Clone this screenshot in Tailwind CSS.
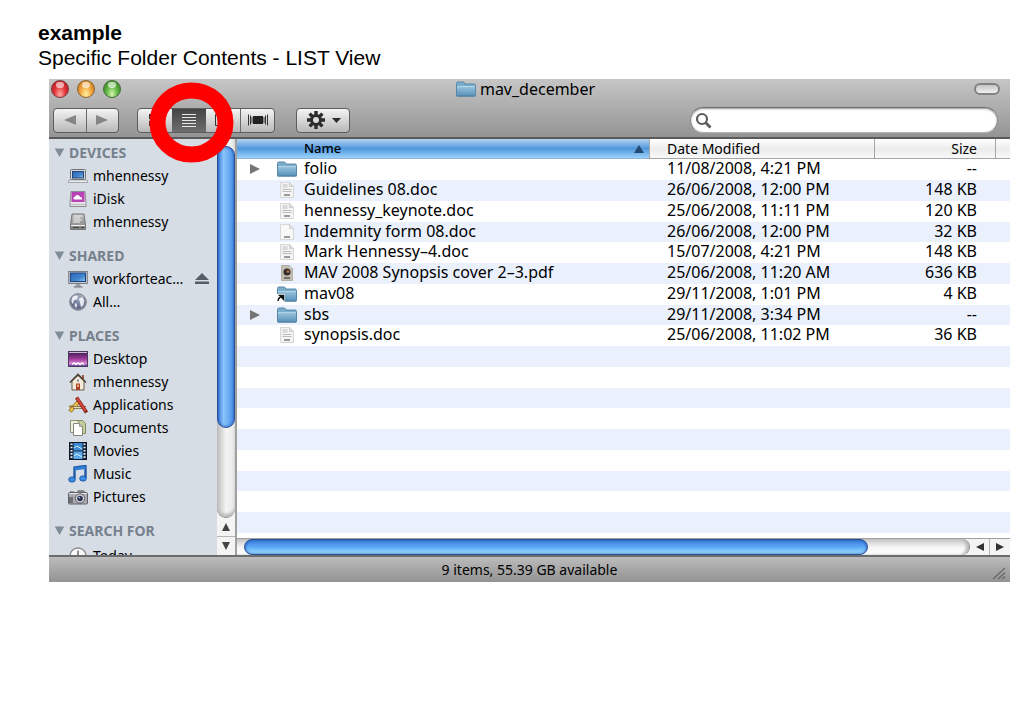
<!DOCTYPE html>
<html lang="en">
<head>
<meta charset="utf-8">
<title>Specific Folder Contents - LIST View</title>
<script src="https://cdn.jsdelivr.net/npm/@tailwindcss/browser@4"></script>
</head>
<body class="bg-white text-black">
<svg width="0" height="0" class="absolute" aria-hidden="true">
  <defs>
    <linearGradient id="gFolder" x1="0" y1="0" x2="0" y2="1"><stop offset="0" stop-color="#98c3dc"/><stop offset="1" stop-color="#5c94bb"/></linearGradient>
    <linearGradient id="gScreen" x1="0" y1="0" x2="1" y2="1"><stop offset="0" stop-color="#2c66b8"/><stop offset=".6" stop-color="#3f86cf"/><stop offset="1" stop-color="#8cc4ee"/></linearGradient>
    <linearGradient id="gDesk" x1="0" y1="0" x2="0" y2="1"><stop offset="0" stop-color="#3a1a50"/><stop offset=".5" stop-color="#a03a9c"/><stop offset=".8" stop-color="#d98ad6"/><stop offset="1" stop-color="#3c2f8a"/></linearGradient>
    <linearGradient id="gMetal" x1="0" y1="0" x2="0" y2="1"><stop offset="0" stop-color="#c2c2c2"/><stop offset="1" stop-color="#7e7e7e"/></linearGradient>
    <radialGradient id="gGlobe"><stop offset="0" stop-color="#8790b0"/><stop offset=".7" stop-color="#5f6987"/><stop offset="1" stop-color="#8a8f9c"/></radialGradient>
    <symbol id="folder" viewBox="0 0 20 16">
      <path d="M.5 2.500q0-1.500 1.500-1.500h5q1 0 1.400 1l.4 1H18q1.500 0 1.500 1.500V14q0 1-1 1h-17q-1 0-1-1z" fill="#7aaccb" stroke="#5687a8"/>
      <path d="M1 5.500h18V14.500H1z" fill="url(#gFolder)"/>
      <path d="M1 5.500h18" stroke="#b3d4e6"/>
      <path d="M.5 15h19" stroke="#477899"/>
    </symbol>
    <symbol id="doc" viewBox="0 0 18 18">
      <path d="M2.500 1.500h9l4 4v11h-13z" fill="#f4f4f4" stroke="#d6d6d6"/>
      <path d="M11.500 1.500v4h4z" fill="#dedede" stroke="#cecece"/>
      <path d="M4.500 4h5M4.500 6h5M4.500 8.500h9M4.500 10.500h9" stroke="#bcbcbc"/>
      <path d="M6 14h6" stroke="#999" stroke-width="2"/>
    </symbol>
    <symbol id="docblank" viewBox="0 0 18 18">
      <path d="M2.500 1.500h9l4 4v11h-13z" fill="#f8f8f8" stroke="#d8d8d8"/>
      <path d="M11.500 1.500v4h4z" fill="#e6e6e6" stroke="#d2d2d2"/>
      <path d="M6 14h6" stroke="#999" stroke-width="2"/>
    </symbol>
    <symbol id="pdf" viewBox="0 0 18 18">
      <path d="M3.500 1.500h8l3 3v12h-11z" fill="#c4beb2" stroke="#b3afa6"/>
      <path d="M11.500 1.500v3h3z" fill="#eee" stroke="#bbb"/>
      <circle cx="9" cy="8" r="3.600" fill="#35302d"/><circle cx="10" cy="7.500" r="1.500" fill="#a8683b"/>
      <path d="M6 14h6" stroke="#73706b" stroke-width="2"/>
    </symbol>
    <symbol id="laptop" viewBox="0 0 20 18">
      <rect x="2.500" y="2.500" width="15" height="10" rx="1" fill="#d9dde3" stroke="#6c727b"/>
      <rect x="4.500" y="4.500" width="11" height="6.500" fill="url(#gScreen)" stroke="#27426b"/>
      <path d="M1 13h18l1 2.500H0z" fill="#eceef0" stroke="#858a91" stroke-width=".7"/>
    </symbol>
    <symbol id="idisk" viewBox="0 0 20 18">
      <path d="M3 1.500h14l1 12v3H2v-3z" fill="#e6e6ea" stroke="#8b8b92"/>
      <rect x="3.500" y="2" width="13" height="10" fill="#b843b4"/>
      <path d="M6 9.500q-1.500-2 .7-2.500.6-2.300 3-2 2 .3 2.400 2 2.400-.2 2.200 2.500z" fill="#fff"/>
      <path d="M3 14.500h14" stroke="#bbb"/>
    </symbol>
    <symbol id="disk" viewBox="0 0 20 18">
      <path d="M4 1h12l1.500 11v4.500h-15V12z" fill="url(#gMetal)" stroke="#777"/>
      <path d="M6 3h8M6 5h6M5.500 7h8M5 9h7" stroke="#f0f0f0"/>
      <path d="M3 12.500h14" stroke="#eee"/><path d="M5 14.500h6M13 14.500h3" stroke="#444"/>
    </symbol>
    <symbol id="monitor" viewBox="0 0 20 18">
      <rect x=".7" y="1.500" width="18.600" height="12" fill="#c5c9ce" stroke="#777d86"/>
      <rect x="2.500" y="3" width="15" height="8.500" fill="url(#gScreen)" stroke="#1f437f"/>
      <path d="M8 14h4l1 3H7z" fill="#9ba0a7"/><path d="M5.500 17h9" stroke="#6f7379"/>
    </symbol>
    <symbol id="globe" viewBox="0 0 20 18">
      <circle cx="10" cy="9" r="8.300" fill="url(#gGlobe)" stroke="#7d8290"/>
      <path d="M4 5q3-3.500 6-2l-1 3-3 1.500-1 3.500q-2.500-2-1-6zM11 6l3-2 2.500 3-1 5-2.500 2.500-1-4.500zM7 10l2 1-.5 4-2-2z" fill="#e3e6ee"/>
      <ellipse cx="10" cy="4.500" rx="6" ry="3" fill="#fff" opacity=".35"/>
    </symbol>
    <symbol id="desktop" viewBox="0 0 20 18">
      <rect x=".5" y="1.500" width="19" height="15" fill="url(#gDesk)" stroke="#4b3a5e"/>
      <path d="M1 2.500h18" stroke="#c9bdd2"/>
      <path d="M4 14.500l2-1.500 2 1.500 2-1.500 2 1.500 2-1.500 2 1.500" stroke="#fff" stroke-width="1.500" fill="none"/>
    </symbol>
    <symbol id="home" viewBox="0 0 20 18">
      <path d="M14 2h2v4h-2z" fill="#9b5b3a"/>
      <path d="M4 8l6-5.500L16 8v9H4z" fill="#f3ead7" stroke="#6b5c4a"/>
      <path d="M2 9.500l8-8 8 8" fill="none" stroke="#4d423a" stroke-width="1.700"/>
      <path d="M8 10.500h4V17H8z" fill="#a8412a"/><path d="M9.200 11.500h1.600v2.500H9.200z" fill="#f4c48c"/>
      <path d="M9 6.500h2v2H9z" fill="#6f88a8"/>
    </symbol>
    <symbol id="apps" viewBox="0 0 20 18">
      <path d="M11 5L2 15.500" stroke="#8b6a20" stroke-width="4"/><path d="M11 5L2.500 15" stroke="#f1c84a" stroke-width="2.600"/>
      <path d="M1 10.500h4" stroke="#9a7b2c" stroke-width="2"/>
      <path d="M5 11.500h13" stroke="#6d5233" stroke-width="3"/><path d="M5.500 11.500h12.500" stroke="#ecdcae" stroke-width="1.600"/>
      <path d="M8.500 1.500l10 15" stroke="#7e1f18" stroke-width="3.600"/><path d="M9 2l8.500 13" stroke="#d9483a" stroke-width="2.200"/>
    </symbol>
    <symbol id="docs" viewBox="0 0 20 18">
      <path d="M7.500 1.500h7l3 3v10h-10z" fill="#c6cf9c" stroke="#828a62"/>
      <path d="M2.500 1.500h6l3 2v10h-9z" fill="#eef0e2" stroke="#8c9175"/>
      <path d="M5.500 4.500h6l3 3v9h-9z" fill="#fff" stroke="#858779"/>
      <path d="M11.500 4.500v3h3z" fill="#ddd" stroke="#999"/>
    </symbol>
    <symbol id="movies" viewBox="0 0 20 18">
      <rect x="1.500" y=".5" width="17" height="17" fill="#16253b" stroke="#0d1726"/>
      <rect x="5.500" y="1" width="9" height="7.500" fill="#3b8bd6"/><rect x="5.500" y="9.500" width="9" height="7.500" fill="#5aa9e8"/>
      <path d="M6 6l3-2 5 3M6 14l3-2 5 3" stroke="#d6efff" fill="none"/>
      <path d="M3.500 1.500v15M16.500 1.500v15" stroke="#e6eef7" stroke-width="2" stroke-dasharray="1.600 1.600"/>
    </symbol>
    <symbol id="music" viewBox="0 0 20 18">
      <path d="M6.500 14V2.500l11-1.500v12" fill="none" stroke="#1d5ba8" stroke-width="2.400"/>
      <path d="M6.500 4l11-1.500" stroke="#2f7fd6" stroke-width="3"/>
      <ellipse cx="4" cy="14.500" rx="3.300" ry="2.600" fill="#3c8fe4" stroke="#1d5ba8"/>
      <ellipse cx="15" cy="13.500" rx="3.300" ry="2.600" fill="#3c8fe4" stroke="#1d5ba8"/>
    </symbol>
    <symbol id="camera" viewBox="0 0 20 18">
      <path d="M2 3.500h4v2H2z" fill="#4a4a4a"/><path d="M9 4l1-2h6l1 2" fill="#888"/>
      <rect x=".5" y="4.500" width="19" height="11.500" rx="1" fill="#a9abb0" stroke="#5f6166"/>
      <path d="M1 5.500h18" stroke="#e4e5e8"/><path d="M1 9v6h4V9z" fill="#6d6f75"/>
      <circle cx="12" cy="10.500" r="4.600" fill="#d5d7db" stroke="#5d5f66"/><circle cx="12" cy="10.500" r="2.800" fill="#2c3350"/><circle cx="11.300" cy="9.600" r=".9" fill="#aab8e0"/>
    </symbol>
    <symbol id="clock" viewBox="0 0 20 18">
      <circle cx="10" cy="9" r="8" fill="#fafafa" stroke="#8d8d8d" stroke-width="1.400"/>
      <path d="M10 3.500V9h4" fill="none" stroke="#555" stroke-width="1.300"/>
    </symbol>
    <symbol id="right" viewBox="0 0 12 12"><path d="M1 1l10 5-10 5z" fill="#757575"/></symbol>
    <symbol id="down" viewBox="0 0 12 12"><path d="M.8 1.500h10.400L6 11z" fill="#818c99"/></symbol>
  </defs>
</svg>

<main class="relative flex h-screen flex-col overflow-hidden pt-5 pr-[13px] pb-[126px] pl-[49px]">
  <header class="-ml-[11px] mb-[9px] font-['Liberation_Sans',sans-serif] text-[21px] leading-[25px]">
    <h1 class="font-bold">example</h1>
    <p>Specific Folder Contents - LIST View</p>
  </header>

  <section aria-label="mav_december" class="flex min-h-0 flex-1 flex-col font-['Noto_Sans',sans-serif]">
    <!-- title bar and toolbar -->
    <div class="border-b-2 border-[#5a5a5a] bg-linear-to-b from-[#c6c6c6] to-[#949494]">
      <div class="flex h-5 items-center px-[2px]">
        <div class="flex flex-1 gap-2">
          <button aria-label="Close" class="size-[18px] rounded-full border border-[#7d3a3a] bg-radial-[at_50%_85%] from-[#ffa9a0] via-[#e0333a] to-[#a8141c] p-[2px]"><span class="mx-auto block h-1.5 w-2 -translate-y-1 rounded-full bg-white/60"></span></button>
          <button aria-label="Minimise" class="size-[18px] rounded-full border border-[#8a6331] bg-radial-[at_50%_85%] from-[#fff0a0] via-[#f2a640] to-[#c06a17] p-[2px]"><span class="mx-auto block h-1.5 w-2 -translate-y-1 rounded-full bg-white/60"></span></button>
          <button aria-label="Zoom" class="size-[18px] rounded-full border border-[#3f6a34] bg-radial-[at_50%_85%] from-[#d2f7a8] via-[#62b445] to-[#2f7a24] p-[2px]"><span class="mx-auto block h-1.5 w-2 -translate-y-1 rounded-full bg-white/60"></span></button>
        </div>
        <div class="flex items-center gap-1 text-[16px] leading-5">
          <svg class="h-4 w-5"><use href="#folder"/></svg><h2>mav_december</h2>
        </div>
        <div class="flex flex-1 justify-end pr-2">
          <button aria-label="Toggle toolbar" class="h-3 w-[26px] rounded-full border-2 border-[#828282] bg-linear-to-b from-[#c4c4c4] to-[#f2f2f2]"></button>
        </div>
      </div>
      <div class="flex h-[38px] items-center pt-1 pr-3 pl-1">
        <div class="flex h-[25px] w-[66px] rounded-[4px] border border-[#5d5d5d] bg-linear-to-b from-[#f4f4f4] to-[#b9b9b9]">
          <button aria-label="Back" class="flex flex-1 items-center justify-center border-r border-[#6a6a6a]"><svg class="h-[10px] w-3" viewBox="0 0 12 10"><path d="M12 0v10L0 5z" fill="#868686"/></svg></button>
          <button aria-label="Forward" class="flex flex-1 items-center justify-center"><svg class="h-[10px] w-3" viewBox="0 0 12 10"><path d="M0 0v10l12-5z" fill="#868686"/></svg></button>
        </div>
        <div class="ml-[18px] grid h-[25px] w-[138px] grid-cols-4 rounded-[4px] border border-[#5d5d5d] bg-linear-to-b from-[#f4f4f4] to-[#b9b9b9]">
          <button aria-label="Icon view" class="flex items-center justify-center"><svg class="h-3 w-4" viewBox="0 0 16 12"><path d="M2 0h5v5H2zM9 0h5v5H9zM2 7h5v5H2zM9 7h5v5H9z" fill="#333"/></svg></button>
          <button aria-label="List view" aria-pressed="true" class="flex items-center justify-center bg-linear-to-b from-[#444] to-[#6e6e6e]"><svg class="h-[13px] w-4" viewBox="0 0 16 13"><path d="M1 .5h14M1 3.500h14M1 6.500h14M1 9.500h14M1 12.500h14" stroke="#e6e6e6"/></svg></button>
          <button aria-label="Column view" class="flex items-center justify-center"><svg class="h-3 w-4" viewBox="0 0 16 12"><path d="M.5 .5h15v11H.5zM5.500 0v12M10.500 0v12" fill="none" stroke="#333"/></svg></button>
          <button aria-label="Cover Flow" class="flex items-center justify-center border-l border-[#6a6a6a]"><svg class="h-3 w-5" viewBox="0 0 20 12"><path d="M5 2h10v8H5z" fill="#222"/><path d="M.5 .5v11M2.500 1.500v9M17.500 1.500v9M19.500 .5v11M4 3v6M16 3v6" stroke="#333"/></svg></button>
        </div>
        <button aria-label="Action" class="ml-[21px] flex h-[25px] w-[54px] items-center justify-center gap-1.5 rounded-[4px] border border-[#5d5d5d] bg-linear-to-b from-[#f4f4f4] to-[#b9b9b9]">
          <svg class="h-[18px] w-5" viewBox="0 0 20 18"><path d="M10 0v18M1 9h18M3.600 2.600l12.800 12.800M16.400 2.600L3.600 15.400" stroke="#2b2b2b" stroke-width="3.400"/><circle cx="10" cy="9" r="6" fill="#2b2b2b"/><circle cx="10" cy="9" r="3" fill="#dcdcdc"/></svg>
          <svg class="h-[5px] w-[9px]" viewBox="0 0 9 5"><path d="M0 0h9L4.500 5z" fill="#2b2b2b"/></svg>
        </button>
        <label class="ml-auto flex h-[26px] w-[308px] items-center rounded-full border border-t-[#6d6d6d] border-r-[#8c8c8c] border-b-[#b5b5b5] border-l-[#8c8c8c] bg-white pl-1 shadow-[inset_0_1px_2px_#999]">
          <svg class="size-[17px]" viewBox="0 0 17 17"><circle cx="7" cy="7" r="5" fill="none" stroke="#5c5c5c" stroke-width="2.200"/><path d="M10.500 10.500l5 5" stroke="#5c5c5c" stroke-width="2.800"/></svg>
          <input type="search" aria-label="Search" class="min-w-0 flex-1 bg-transparent px-2 text-[14px] outline-none">
        </label>
      </div>
    </div>

    <div class="flex min-h-0 flex-1">
      <!-- sidebar -->
      <nav aria-label="Sidebar" class="w-[168px] shrink-0 overflow-hidden bg-[#d6dde5] pt-[2px] text-[14px] leading-[23px] whitespace-nowrap">
        <h3 class="flex items-center gap-1 pl-[5px] font-bold text-[#76818e]"><svg class="size-[11px]"><use href="#down"/></svg>DEVICES</h3>
        <ul>
          <li><a href="#" class="flex items-center gap-[5px] pl-[19px]"><svg class="h-[18px] w-5"><use href="#laptop"/></svg>mhennessy</a></li>
          <li><a href="#" class="flex items-center gap-[5px] pl-[19px]"><svg class="h-[18px] w-5"><use href="#idisk"/></svg>iDisk</a></li>
          <li><a href="#" class="flex items-center gap-[5px] pl-[19px]"><svg class="h-[18px] w-5"><use href="#disk"/></svg>mhennessy</a></li>
        </ul>
        <h3 class="mt-[11px] flex items-center gap-1 pl-[5px] font-bold text-[#76818e]"><svg class="size-[11px]"><use href="#down"/></svg>SHARED</h3>
        <ul>
          <li class="flex items-center justify-between pr-2"><a href="#" class="flex items-center gap-[5px] pl-[19px]"><svg class="h-[18px] w-5"><use href="#monitor"/></svg>workforteac…</a><button aria-label="Eject"><svg class="h-[11px] w-[14px]" viewBox="0 0 14 11"><path d="M7 0l7 7H0zM0 8.500h14V11H0z" fill="#555d66"/></svg></button></li>
          <li><a href="#" class="flex items-center gap-[5px] pl-[19px]"><svg class="h-[18px] w-5"><use href="#globe"/></svg>All…</a></li>
        </ul>
        <h3 class="mt-[11px] flex items-center gap-1 pl-[5px] font-bold text-[#76818e]"><svg class="size-[11px]"><use href="#down"/></svg>PLACES</h3>
        <ul>
          <li><a href="#" class="flex items-center gap-[5px] pl-[19px]"><svg class="h-[18px] w-5"><use href="#desktop"/></svg>Desktop</a></li>
          <li><a href="#" class="flex items-center gap-[5px] pl-[19px]"><svg class="h-[18px] w-5"><use href="#home"/></svg>mhennessy</a></li>
          <li><a href="#" class="flex items-center gap-[5px] pl-[19px]"><svg class="h-[18px] w-5"><use href="#apps"/></svg>Applications</a></li>
          <li><a href="#" class="flex items-center gap-[5px] pl-[19px]"><svg class="h-[18px] w-5"><use href="#docs"/></svg>Documents</a></li>
          <li><a href="#" class="flex items-center gap-[5px] pl-[19px]"><svg class="h-[18px] w-5"><use href="#movies"/></svg>Movies</a></li>
          <li><a href="#" class="flex items-center gap-[5px] pl-[19px]"><svg class="h-[18px] w-5"><use href="#music"/></svg>Music</a></li>
          <li><a href="#" class="flex items-center gap-[5px] pl-[19px]"><svg class="h-[18px] w-5"><use href="#camera"/></svg>Pictures</a></li>
        </ul>
        <h3 class="mt-[11px] flex items-center gap-1 pl-[5px] font-bold text-[#76818e]"><svg class="size-[11px]"><use href="#down"/></svg>SEARCH FOR</h3>
        <ul>
          <li><a href="#" class="flex items-center gap-[5px] pt-[2px] pl-[19px]"><svg class="h-[18px] w-5"><use href="#clock"/></svg>Today</a></li>
        </ul>
      </nav>

      <!-- sidebar scroll bar -->
      <div class="flex w-5 shrink-0 flex-col border-r-2 border-[#a0a0a0] bg-[#f4f4f4]">
        <div class="min-h-0 flex-1 rounded-b-full border-b border-[#8b8b8b] bg-linear-to-r from-[#bdbdbd] via-[#f4f4f4] to-[#e8e8e8] pt-[7px] shadow-[inset_0_-3px_3px_#bbb]">
          <div class="h-[76%] rounded-full border border-[#2a4f95] bg-linear-to-r from-[#3f7fdc] via-[#8ac4fa] via-35% to-[#4a90e6] shadow-[inset_0_0_3px_#1b4fb0]"></div>
        </div>
        <button aria-label="Scroll up" class="flex h-[19px] shrink-0 items-center justify-center border-b border-[#b4b4b4]"><svg class="size-2" viewBox="0 0 8 8"><path d="M4 0l4 8H0z" fill="#444"/></svg></button>
        <button aria-label="Scroll down" class="flex h-[18px] shrink-0 items-center justify-center"><svg class="size-2" viewBox="0 0 8 8"><path d="M0 0h8L4 8z" fill="#444"/></svg></button>
      </div>

      <!-- file list -->
      <div class="flex min-w-0 flex-1 flex-col">
        <div class="min-h-0 flex-1 overflow-hidden">
          <table class="w-full table-fixed border-separate border-spacing-0 text-[16px] leading-[19px] whitespace-nowrap">
            <colgroup><col><col class="w-[226px]"><col class="w-[121px]"><col class="w-[14px]"></colgroup>
            <thead class="text-[14px] leading-[19px]">
              <tr class="bg-linear-to-b from-white via-[#ececec] to-[#fafafa] text-left">
                <th scope="col" class="border-b border-[#8fb4d8] bg-linear-to-b from-[#b5d3f2] via-[#4f97dc] to-[#9bd2fb] p-0 font-medium"><button class="flex w-full items-center justify-between pr-[5px] pl-[67px] text-[13px] leading-[19px]">Name<svg class="h-2 w-[10px]" viewBox="0 0 10 8"><path d="M5 0l5 8H0z" fill="#24496f"/></svg></button></th>
                <th scope="col" class="border-r border-b border-l border-[#a5a5a5] p-0 pl-[17px] font-normal">Date Modified</th>
                <th scope="col" class="border-r border-b border-[#a5a5a5] p-0 pr-[18px] text-right font-normal">Size</th>
                <td class="border-b border-[#a5a5a5] p-0"></td>
              </tr>
            </thead>
            <tbody class="[&_td]:p-0 [&_td]:align-top [&_td:nth-child(2)]:pl-[18px] [&_td:nth-child(3)]:pr-[19px] [&_td:nth-child(3)]:text-right [&>tr]:h-[21px] [&>tr:nth-child(4n)]:h-5 [&>tr:nth-child(even)]:bg-[#eaf1fd]">
              <tr><td><div class="flex items-center pl-3"><button aria-label="Expand folio" class="flex w-7 items-center"><svg class="size-3"><use href="#right"/></svg></button><svg class="mr-[7px] h-4 w-5"><use href="#folder"/></svg>folio</div></td><td>11/08/2008, 4:21 PM</td><td>--</td><td></td></tr>
              <tr><td><div class="flex items-center pl-10"><svg class="mr-[7px] h-[18px] w-5"><use href="#doc"/></svg>Guidelines 08.doc</div></td><td>26/06/2008, 12:00 PM</td><td>148 KB</td><td></td></tr>
              <tr><td><div class="flex items-center pl-10"><svg class="mr-[7px] h-[18px] w-5"><use href="#doc"/></svg>hennessy_keynote.doc</div></td><td>25/06/2008, 11:11 PM</td><td>120 KB</td><td></td></tr>
              <tr><td><div class="flex items-center pl-10"><svg class="mr-[7px] h-[18px] w-5"><use href="#docblank"/></svg>Indemnity form 08.doc</div></td><td>26/06/2008, 12:00 PM</td><td>32 KB</td><td></td></tr>
              <tr><td><div class="flex items-center pl-10"><svg class="mr-[7px] h-[18px] w-5"><use href="#doc"/></svg>Mark Hennessy–4.doc</div></td><td>15/07/2008, 4:21 PM</td><td>148 KB</td><td></td></tr>
              <tr><td><div class="flex items-center pl-10"><svg class="mr-[7px] h-[18px] w-5"><use href="#pdf"/></svg>MAV 2008 Synopsis cover 2–3.pdf</div></td><td>25/06/2008, 11:20 AM</td><td>636 KB</td><td></td></tr>
              <tr><td><div class="flex items-center pl-10"><svg class="mr-[7px] h-4 w-5" viewBox="0 0 20 16"><use href="#folder" width="20" height="16"/><path d="M0 8h7.500v8H0z" fill="#fff"/><path d="M1 15q0-3 3-4.500M2.500 9.500h4v4z" fill="#111" stroke="#111" stroke-width="1.300"/></svg>mav08</div></td><td>29/11/2008, 1:01 PM</td><td>4 KB</td><td></td></tr>
              <tr><td><div class="flex items-center pl-3"><button aria-label="Expand sbs" class="flex w-7 items-center"><svg class="size-3"><use href="#right"/></svg></button><svg class="mr-[7px] h-4 w-5"><use href="#folder"/></svg>sbs</div></td><td>29/11/2008, 3:34 PM</td><td>--</td><td></td></tr>
              <tr><td><div class="flex items-center pl-10"><svg class="mr-[7px] h-[18px] w-5"><use href="#doc"/></svg>synopsis.doc</div></td><td>25/06/2008, 11:02 PM</td><td>36 KB</td><td></td></tr>
              <tr><td colspan="4"></td></tr><tr><td colspan="4"></td></tr><tr><td colspan="4"></td></tr>
              <tr><td colspan="4"></td></tr><tr><td colspan="4"></td></tr><tr><td colspan="4"></td></tr>
              <tr><td colspan="4"></td></tr><tr><td colspan="4"></td></tr><tr><td colspan="4"></td></tr>
            </tbody>
          </table>
        </div>
        <div class="flex h-[17px] shrink-0 border-t border-[#a0a0a0] bg-[#f4f4f4]">
          <div class="min-w-0 flex-1 rounded-r-full border-r border-[#8b8b8b] bg-linear-to-b from-[#c4c4c4] via-[#f6f6f6] to-white pl-[7px] shadow-[inset_-3px_0_3px_#bbb]">
            <div class="h-full w-[86%] rounded-full border border-[#2a4f95] bg-linear-to-b from-[#3f7fdc] via-[#5aa8f4] to-[#a5e3ff] shadow-[inset_0_0_3px_#1b4fb0]"></div>
          </div>
          <button aria-label="Scroll left" class="flex w-5 items-center justify-center border-r border-[#b4b4b4]"><svg class="size-2" viewBox="0 0 8 8"><path d="M8 0v8L0 4z" fill="#333"/></svg></button>
          <button aria-label="Scroll right" class="flex w-5 items-center justify-center"><svg class="size-2" viewBox="0 0 8 8"><path d="M0 0v8l8-4z" fill="#333"/></svg></button>
        </div>
      </div>
    </div>

    <!-- status bar -->
    <footer class="relative flex h-[27px] shrink-0 items-center justify-center border-t-2 border-[#6c6c6c] bg-linear-to-b from-[#bcbcbc] to-[#939393] text-[14px] leading-5">
      <p>9 items, 55.39 GB available</p>
      <svg class="absolute right-1 bottom-[2px] size-[14px]" viewBox="0 0 14 14"><path d="M1 13L13 2M6 13l7-6.500M10 13l3-2.500" stroke="#666" stroke-width="1.200"/></svg>
    </footer>
  </section>

  <!-- highlight around the list view button -->
  <svg class="absolute top-[82px] left-[149px] h-[81px] w-[85px]" viewBox="0 0 85 81" aria-hidden="true"><ellipse cx="42.500" cy="40.500" rx="34" ry="32" fill="none" stroke="#fe0000" stroke-width="16"/></svg>
</main>
</body>
</html>
